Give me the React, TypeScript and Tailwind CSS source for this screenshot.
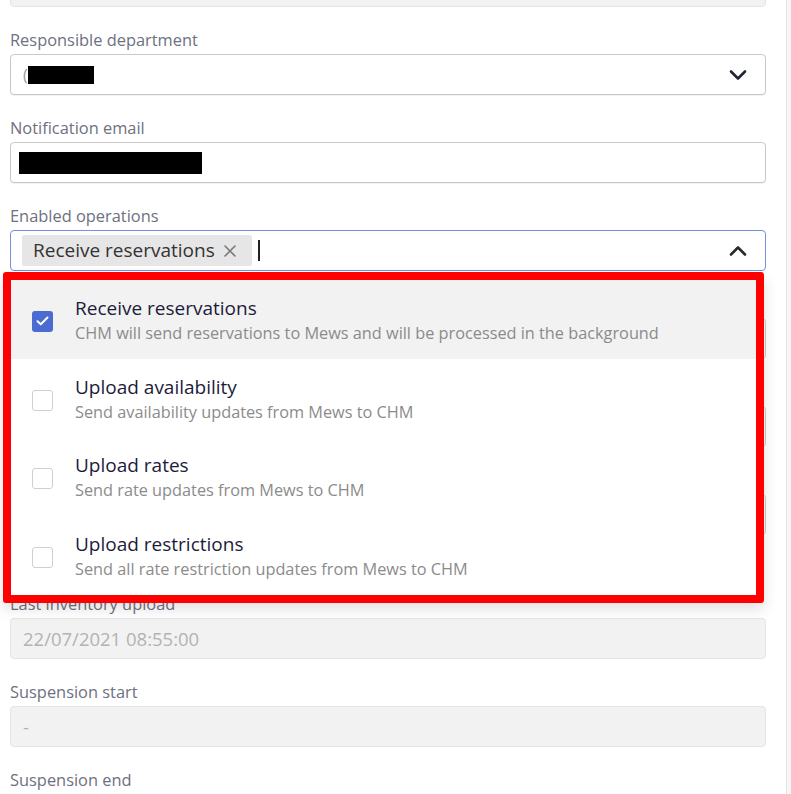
import React from "react";

const font = { fontFamily: '"Open Sans", "Noto Sans", sans-serif' };

function Label({ children }: { children?: React.ReactNode }) {
  return <div className="h-[20px] leading-[20px] text-[16.4px] text-[#6d7180] mb-[4px]">{children}</div>;
}

function ChevronDown() {
  return (
    <svg width="18" height="12" viewBox="0 0 18 12" fill="none">
      <path d="M2 2.5 L9 9.5 L16 2.5" stroke="#1f2633" strokeWidth="2.6" strokeLinecap="round" strokeLinejoin="round" />
    </svg>
  );
}

function ChevronUp() {
  return (
    <svg width="18" height="12" viewBox="0 0 18 12" fill="none">
      <path d="M2 9.5 L9 2.5 L16 9.5" stroke="#2b2b2b" strokeWidth="2.6" strokeLinecap="round" strokeLinejoin="round" />
    </svg>
  );
}

function Check() {
  return (
    <svg width="13" height="10" viewBox="0 0 13 10" fill="none">
      <path d="M1.5 5.2 L4.8 8.2 L11.5 1.5" stroke="white" strokeWidth="2" strokeLinecap="round" strokeLinejoin="round" />
    </svg>
  );
}

function Cross() {
  return (
    <svg width="14" height="14" viewBox="0 0 14 14" fill="none">
      <path d="M2 2 L12 12 M12 2 L2 12" stroke="#777" strokeWidth="1.6" strokeLinecap="round" />
    </svg>
  );
}

const options = [
  { title: "Receive reservations", desc: "CHM will send reservations to Mews and will be processed in the background", checked: true },
  { title: "Upload availability", desc: "Send availability updates from Mews to CHM", checked: false },
  { title: "Upload rates", desc: "Send rate updates from Mews to CHM", checked: false },
  { title: "Upload restrictions", desc: "Send all rate restriction updates from Mews to CHM", checked: false },
];

function HiddenField() {
  return (
    <div className="mb-[23px]">
      <Label />
      <div className="h-[41px] rounded-[4px] border border-[#cccccc] bg-white" />
    </div>
  );
}

export default function App() {
  return (
    <div className="w-[791px] h-[794px] overflow-hidden bg-white flex" style={font}>
      <div className="flex-1 pl-[10px] pr-[20px]">
        {/* top disabled input, mostly scrolled off */}
        <div className="mt-[-34px] h-[41px] rounded-[4px] border border-[#e4e4e4] bg-[#f2f2f2] mb-[23px]" />

        <div className="mb-[23px]">
          <Label>Responsible department</Label>
          <div className="h-[41px] rounded-[4px] border border-[#c8c8c8] bg-white flex items-center pl-[12px] pr-[18px] shadow-[0_1px_1px_rgba(0,0,0,0.06)]">
            <div className="flex items-center">
              <span className="text-[16px] text-[#999]">(</span>
              <div className="w-[66px] h-[18px] bg-black" />
            </div>
            <div className="flex-1" />
            <ChevronDown />
          </div>
        </div>

        <div className="mb-[23px]">
          <Label>Notification email</Label>
          <div className="h-[41px] rounded-[4px] border border-[#c8c8c8] bg-white flex items-center pl-[8px] shadow-[0_1px_1px_rgba(0,0,0,0.06)]">
            <div className="w-[183px] h-[22px] bg-black" />
          </div>
        </div>

        <div className="mb-[23px] relative z-10">
          <Label>Enabled operations</Label>
          <div className="h-[41px] rounded-[4px] border border-[#7391e0] bg-white flex items-center pl-[11px] pr-[18px]">
            <div className="h-[31px] bg-[#e6e6e6] rounded-[2px] flex items-center pl-[11px] pr-[15px] text-[19px] text-[#333]">
              <span>Receive reservations</span>
              <span className="ml-[8px] flex items-center">
                <Cross />
              </span>
            </div>
            <div className="ml-[6px] w-[2px] h-[21px] bg-[#222]" />
            <div className="flex-1" />
            <ChevronUp />
          </div>

          {/* dropdown overlay */}
          <div className="absolute left-[-7px] top-[66px] w-[761px] h-[331px] border-[8px] border-[#ff0000] rounded-[3px] bg-white shadow-[0_6px_14px_rgba(0,0,0,0.12)] flex flex-col">
            {options.map((o) => (
              <div
                key={o.title}
                className={`flex-1 flex items-center pl-[21px] ${o.checked ? "bg-[#f2f2f2]" : "bg-white"}`}
              >
                {o.checked ? (
                  <div className="mt-[4px] w-[21px] h-[21px] rounded-[3px] bg-[#4a6bd0] flex items-center justify-center shrink-0">
                    <Check />
                  </div>
                ) : (
                  <div className="mt-[4px] w-[21px] h-[21px] rounded-[3px] border-[1.5px] border-[#d0d0d0] bg-white shrink-0" />
                )}
                <div className="ml-[22px] flex flex-col">
                  <div className="text-[19px] leading-[24px] text-[#1c1c3a]">{o.title}</div>
                  <div className="mt-[3px] text-[16.3px] leading-[20px] text-[#8b8b8b]">{o.desc}</div>
                </div>
              </div>
            ))}
          </div>
        </div>

        {/* fields hidden behind dropdown */}
        <HiddenField />
        <HiddenField />
        <HiddenField />
        <div className="h-[36px]" />

        <div className="mb-[23px]">
          <Label>Last inventory upload</Label>
          <div className="h-[41px] rounded-[4px] border border-[#e4e4e4] bg-[#f2f2f2] flex items-center pl-[12px] text-[18.5px] text-[#b3b3b3]">
            22/07/2021 08:55:00
          </div>
        </div>

        <div className="mb-[23px]">
          <Label>Suspension start</Label>
          <div className="h-[41px] rounded-[4px] border border-[#e4e4e4] bg-[#f2f2f2] flex items-center pl-[12px] text-[18.5px] text-[#b3b3b3]">
            -
          </div>
        </div>

        <div className="mb-[23px]">
          <Label>Suspension end</Label>
          <div className="h-[41px] rounded-[4px] border border-[#e4e4e4] bg-[#f2f2f2]" />
        </div>
      </div>
      <div className="w-[5px] bg-[#f7f7f7] border-l border-[#e4e4e4]" />
    </div>
  );
}
